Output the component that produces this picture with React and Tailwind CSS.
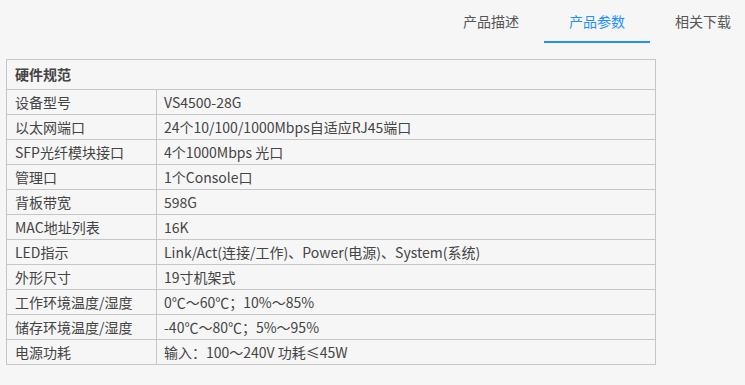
import React, { useState } from "react";

const tabs = ["产品描述", "产品参数", "相关下载"];

const specs = [
    ["设备型号", "VS4500-28G"],
    ["以太网端口", "24个10/100/1000Mbps自适应RJ45端口"],
    ["SFP光纤模块接口", "4个1000Mbps 光口"],
    ["管理口", "1个Console口"],
    ["背板带宽", "598G"],
    ["MAC地址列表", "16K"],
    ["LED指示", "Link/Act(连接/工作)、Power(电源)、System(系统)"],
    ["外形尺寸", "19寸机架式"],
    ["工作环境温度/湿度", "0℃～60℃；10%～85%"],
    ["储存环境温度/湿度", "-40℃～80℃；5%～95%"],
    ["电源功耗", "输入：100～240V 功耗≤45W"],
];

const App = () => {
    const [active, setActive] = useState(1);

    return (
        <div className="w-[745px] h-[385px] overflow-hidden bg-[#f6f6f6] text-[14px] text-[#444] font-['Noto_Sans_CJK_SC','Noto_Sans',sans-serif]">
            {/* Tabs */}
            <div className="flex ml-[438px] w-[318px]">
                {tabs.map((t, i) => (
                    <button
                        key={t}
                        onClick={() => setActive(i)}
                        className={`w-[106px] shrink-0 h-[43px] leading-[38px] text-center border-b-[2px] ${i === active ? "text-[#1e90ff] border-[#1e90ff]" : "text-[#555] border-transparent"}`}
                    >
                        {t}
                    </button>
                ))}
            </div>

            {/* Spec table */}
            <table className="mt-[16px] ml-[6px] w-[650px] border-collapse border border-[#c6c6c6]">
                <tbody>
                    <tr>
                        <td colSpan={2} className="h-[30px] px-[8px] font-bold border border-[#c6c6c6]">硬件规范</td>
                    </tr>
                    {specs.map(([k, v]) => (
                        <tr key={k}>
                            <td className="h-[25px] w-[150px] px-[8px] py-0 border border-[#c6c6c6] whitespace-nowrap">{k}</td>
                            <td className="h-[25px] px-[7px] py-0 border border-[#c6c6c6] whitespace-nowrap">{v}</td>
                        </tr>
                    ))}
                </tbody>
            </table>
        </div>
    );
};

export default App;
